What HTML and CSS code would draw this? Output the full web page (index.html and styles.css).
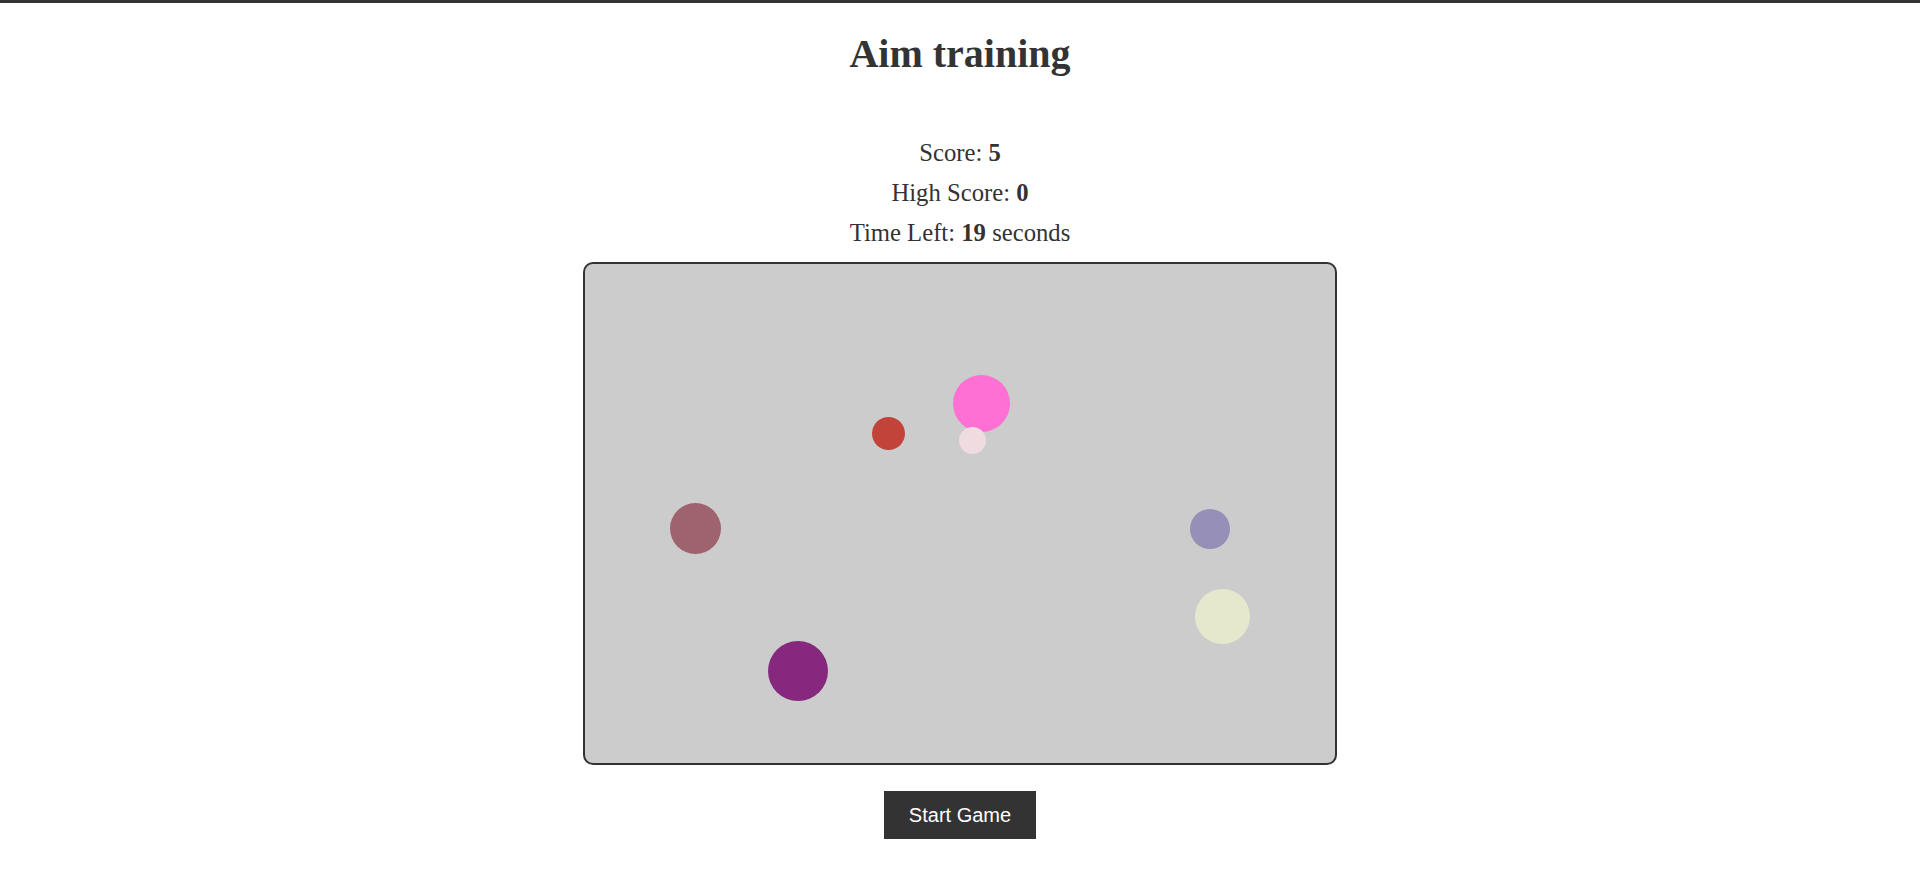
FILE: index.html
```html
<!DOCTYPE html>
<html lang="en">
<head>
<meta charset="utf-8">
<title>Aim training</title>
<link rel="stylesheet" href="styles.css">
</head>
<body>
<div class="topbar"></div>
<main class="page">
  <h1 class="title">Aim training</h1>
  <div class="stats">
    <p class="stat">Score: <b>5</b></p>
    <p class="stat">High Score: <b>0</b></p>
    <p class="stat">Time Left: <b>19</b> seconds</p>
  </div>
  <div class="board">
    <span class="target t-pink"></span>
    <span class="target t-blush"></span>
    <span class="target t-red"></span>
    <span class="target t-mauve"></span>
    <span class="target t-purple"></span>
    <span class="target t-lavender"></span>
    <span class="target t-cream"></span>
  </div>
  <button class="start" type="button">Start Game</button>
</main>
</body>
</html>
```
FILE: styles.css
```css
html, body {
  margin: 0;
  padding: 0;
  background: #fff;
}

body {
  font-family: "Liberation Serif", "Times New Roman", serif;
  color: #333;
}

.topbar {
  height: 3px;
  background: #333;
}

.page {
  display: flex;
  flex-direction: column;
  align-items: center;
}

.title {
  margin: 28px 0 0;
  font-size: 40px;
  line-height: 46px;
  font-weight: bold;
  color: #333;
}

.stats {
  margin-top: 56px;
  display: flex;
  flex-direction: column;
  align-items: center;
}

.stat {
  margin: 0;
  font-size: 24.7px;
  line-height: 40.2px;
}

.stat b {
  font-weight: bold;
}

.board {
  position: relative;
  margin-top: 8px;
  width: 750px;
  height: 499px;
  background: #ccc;
  border: 2px solid #333;
  border-radius: 10px;
}

.target {
  position: absolute;
  border-radius: 50%;
}

.t-pink     { left: 368px; top: 111px; width: 57px; height: 57px; background: #ff70d4; }
.t-blush    { left: 374px; top: 163px; width: 27px; height: 27px; background: #f0dce0; }
.t-red      { left: 287px; top: 153px; width: 33px; height: 33px; background: #c2433a; }
.t-mauve    { left: 85px;  top: 239px; width: 51px; height: 51px; background: #9e636d; }
.t-purple   { left: 183px; top: 377px; width: 60px; height: 60px; background: #86287e; }
.t-lavender { left: 605px; top: 245px; width: 40px; height: 40px; background: #9690b8; }
.t-cream    { left: 610px; top: 325px; width: 55px; height: 55px; background: #e5e8cd; }

.start {
  margin-top: 26px;
  padding: 12px 25px;
  border: none;
  border-radius: 0;
  background: #333;
  color: #fff;
  font-family: "Liberation Sans", Arial, sans-serif;
  font-size: 20px;
  line-height: 24px;
  cursor: pointer;
}
```
